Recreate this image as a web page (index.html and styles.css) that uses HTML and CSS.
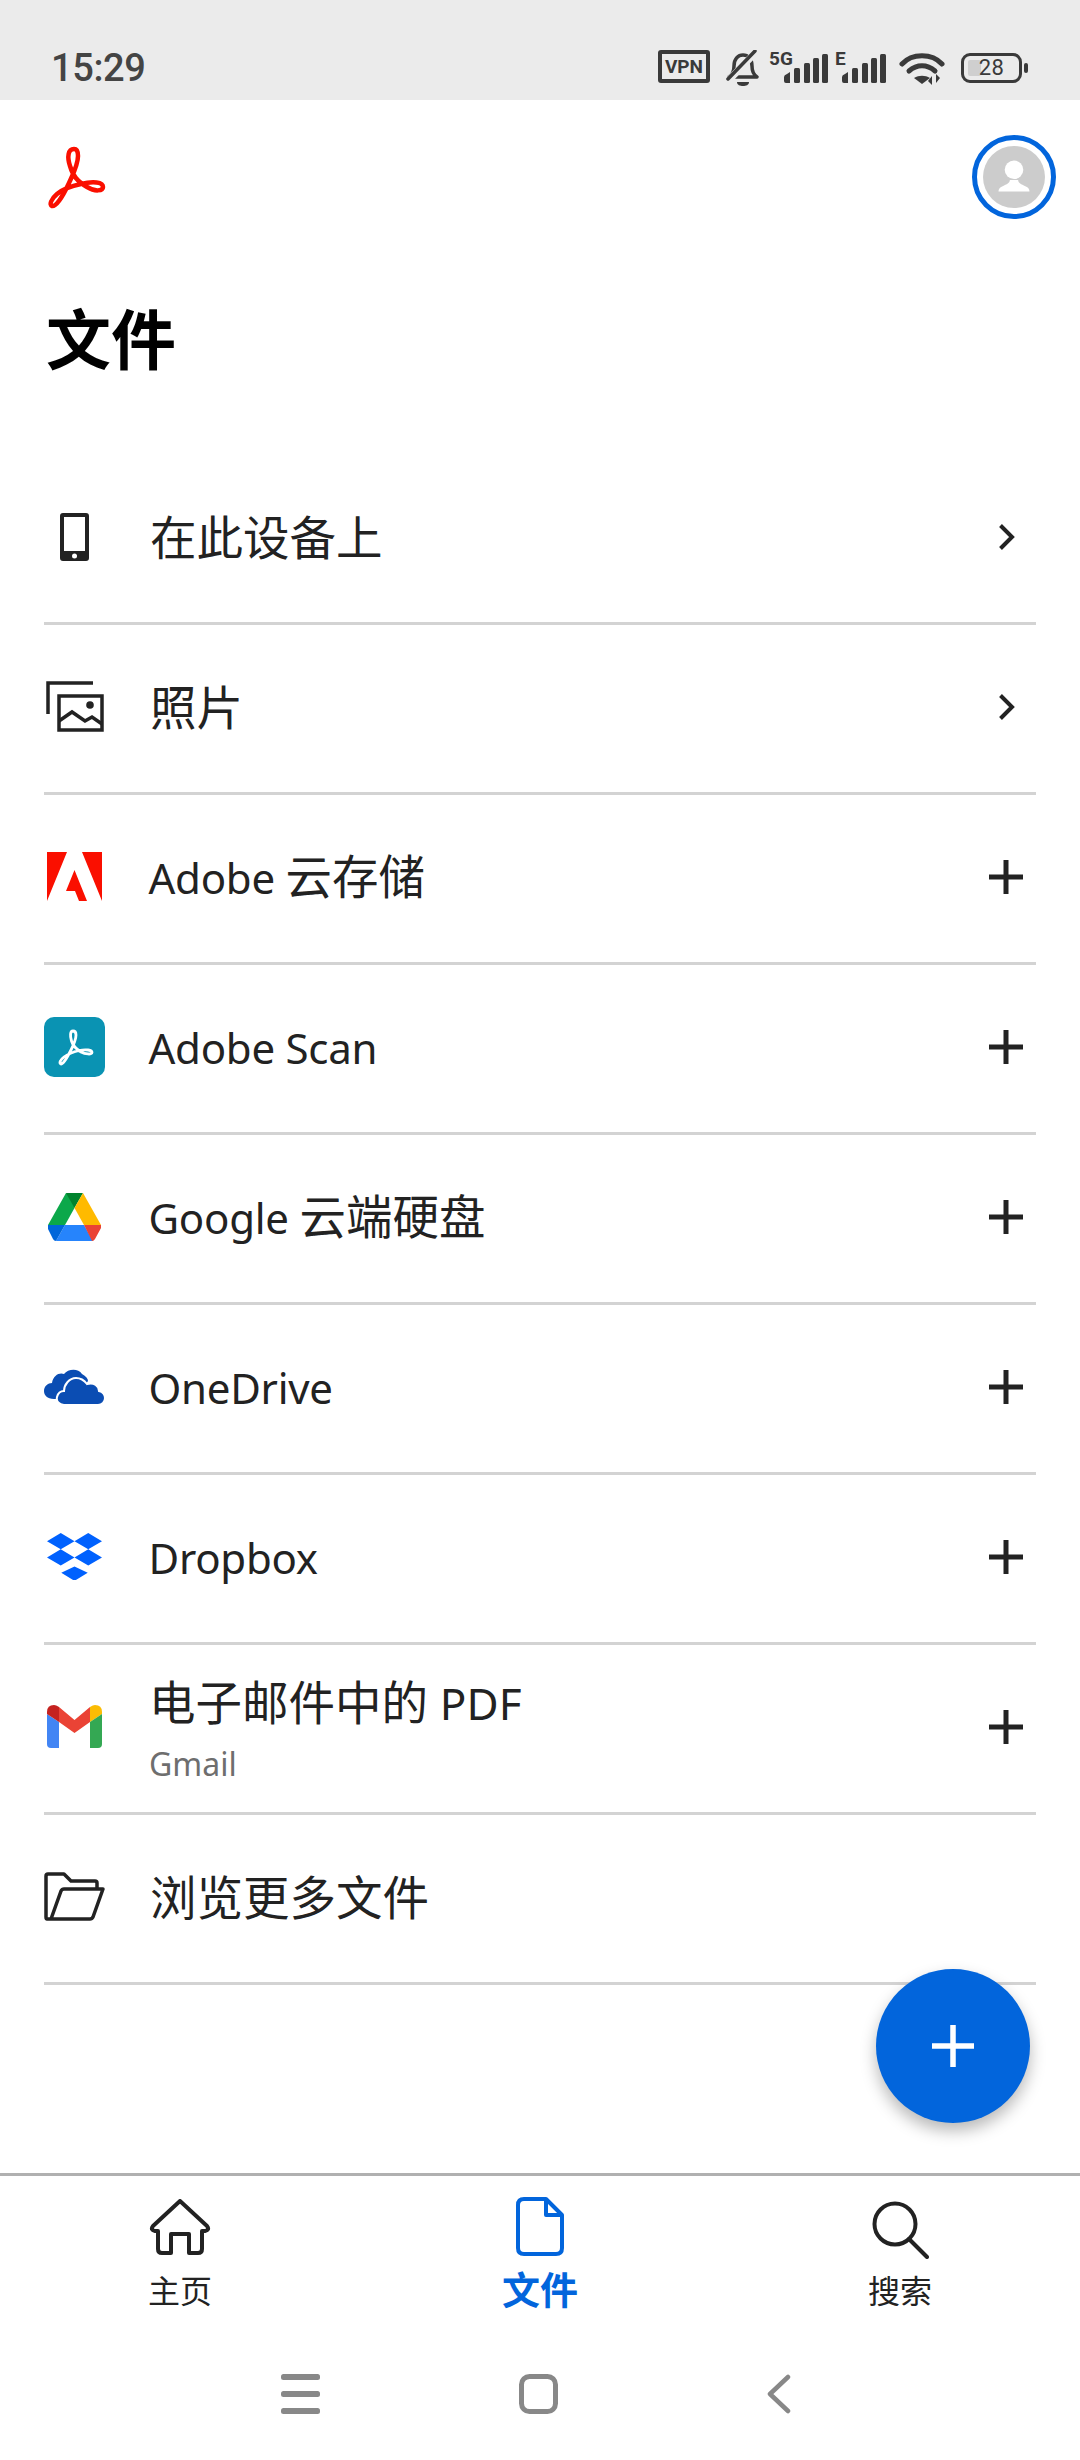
FILE: index.html
```html
<!DOCTYPE html>
<html lang="zh">
<head>
<meta charset="utf-8">
<title>文件</title>
<link rel="stylesheet" href="styles.css">
</head>
<body>
<div class="phone">
  <header class="status">
    <span class="time">15:29</span>
    <div class="status-icons">
      <span class="vpn">VPN</span>
      <svg class="i-bell" viewBox="0 0 34 37"><path d="M3 27c3-2 5-5 5-11 0-7 4-11 9-11s9 4 9 11c0 6 2 9 5 11H3Z" fill="none" stroke="#3a3a3a" stroke-width="3.500" stroke-linejoin="round"/><path d="M11 32h12c0 3-3 4-6 4s-6-1-6-4Z" fill="#3a3a3a"/><path d="M3 30 31 1" stroke="#ebebeb" stroke-width="7"/><path d="M2 29 29 1" stroke="#3a3a3a" stroke-width="3.500" stroke-linecap="round"/></svg>
      <div class="sig sig-5g">
        <span class="sig-label">5G</span>
        <svg class="i-sig" viewBox="0 0 44 29"><g fill="#3a3a3a"><path d="M0 23q0-2 3-3l3-2v11H2q-2 0-2-2Z"/><rect x="10" y="14" width="6" height="15" rx="1.5"/><rect x="20" y="9" width="6" height="20" rx="1.5"/><rect x="29" y="4" width="6" height="25" rx="1.5"/><rect x="38" y="0" width="6" height="29" rx="1.5"/></g></svg>
      </div>
      <div class="sig sig-e">
        <span class="sig-label">E</span>
        <svg class="i-sig" viewBox="0 0 44 29"><g fill="#3a3a3a"><path d="M0 23q0-2 3-3l3-2v11H2q-2 0-2-2Z"/><rect x="10" y="14" width="6" height="15" rx="1.5"/><rect x="20" y="9" width="6" height="20" rx="1.5"/><rect x="29" y="4" width="6" height="25" rx="1.5"/><rect x="38" y="0" width="6" height="29" rx="1.5"/></g></svg>
      </div>
      <svg class="i-wifi" viewBox="0 0 46 33"><g fill="none" stroke="#3a3a3a" stroke-width="5" stroke-linecap="round"><path d="M3 12C13 1 33 1 43 12"/><path d="M10 19c8-7 18-7 26 0"/></g><path d="M15 26c5-3 11-3 16 0l-8 6Z" fill="#3a3a3a"/><path d="M33 33v-9l-4 5ZM37 22v9l4-5Z" fill="#3a3a3a"/></svg>
      <div class="battery">
        <span class="bat-body"><span class="bat-fill"></span><span class="bat-num">28</span></span>
        <span class="bat-nub"></span>
      </div>
    </div>
  </header>

  <div class="appbar">
    <svg class="logo" viewBox="0 0 80 80"><path d="M37 8C31 8 30 16 33 25C36 35 40 40 50 46C58 51 66 50 66 46C66 41 56 40 44 43C34 45 26 48 20 53C14 58 12 64 15 65C19 66 26 55 32 42C36 33 41 24 41 15C41 11 40 8 37 8Z" fill="none" stroke="#fa0f00" stroke-width="4.500" stroke-linejoin="round"/></svg>
    <div class="avatar">
      <div class="avatar-in">
        <svg viewBox="0 0 60 60"><circle cx="30" cy="23" r="9" fill="#fff"/><path d="M15 44c0-2 1-4 4-5 4-2 7-3 7-6h8c0 3 3 4 7 6 3 1 4 3 4 5Z" fill="#fff"/></svg>
      </div>
    </div>
  </div>

  <h1 class="title">文件</h1>

  <ul class="list">
    <li class="row">
      <span class="ic"><svg class="w30" viewBox="0 0 29 48"><path fill-rule="evenodd" d="M3 0h23q3 0 3 3v42q0 3-3 3H3q-3 0-3-3V3q0-3 3-3Zm1 4v34h21V4Z" fill="#222"/><circle cx="14.500" cy="43" r="2.500" fill="#fff"/></svg></span>
      <span class="label">在此设备上</span>
      <svg class="chev" viewBox="0 0 17 28"><path d="M2.500 2.500 14 14 2.500 25.500" fill="none" stroke="#222" stroke-width="4"/></svg>
    </li>
    <li class="row">
      <span class="ic"><svg class="w58" viewBox="0 0 58 51"><g fill="none" stroke="#222" stroke-width="3.500"><path d="M2 33V2H47"/><rect x="13" y="15" width="43" height="34"/><path d="M13 40 26 31 39 40 46 36 56 43"/></g><circle cx="44" cy="24" r="3.800" fill="#222"/></svg></span>
      <span class="label">照片</span>
      <svg class="chev" viewBox="0 0 17 28"><path d="M2.500 2.500 14 14 2.500 25.500" fill="none" stroke="#222" stroke-width="4"/></svg>
    </li>
    <li class="row">
      <span class="ic"><svg class="w55" viewBox="0 0 55 49"><path d="M0 0H20L0 49ZM35 0H55V49ZM27.500 18 40 49H32L28 39H19Z" fill="#fa0f00"/></svg></span>
      <span class="label"><span class="lat">Adobe </span>云存储</span>
      <svg class="plus" viewBox="0 0 36 36"><path d="M18 1V35M1 18H35" stroke="#222" stroke-width="5"/></svg>
    </li>
    <li class="row">
      <span class="ic"><svg class="w61" viewBox="0 0 61 60"><rect width="61" height="60" rx="10" fill="#0a93b3"/><path d="M29 14C26 14 26 19 27.500 24C29 29 32 32 37 35C41 37 48 38 48 35.500C48 33 42 32 35 33.500C29 35 24 37 20 40C16 43 15 46 17 47C19 47 23 41 27 33C30 27 32 22 32 18C32 16 31 14 29 14Z" fill="none" stroke="#fff" stroke-width="2.800" stroke-linejoin="round"/></svg></span>
      <span class="label"><span class="lat">Adobe Scan</span></span>
      <svg class="plus" viewBox="0 0 36 36"><path d="M18 1V35M1 18H35" stroke="#222" stroke-width="5"/></svg>
    </li>
    <li class="row">
      <span class="ic"><svg class="w53" viewBox="0 0 53 48"><path d="M18 0 0 32H17L26.500 15 24 3Z" fill="#0ba84a"/><path d="M18 0H35L26.500 15Z" fill="#00832d"/><path d="M35 0 53 32H36L26.500 15Z" fill="#ffba00"/><path d="M17 32H36L45 48H8Z" fill="#2684fc"/><path d="M0 32H17L8 48Q6 48 5 46L0 36Z" fill="#0066da"/><path d="M36 32H53V35L47 46Q46 48 44 48Z" fill="#ea4335"/></svg></span>
      <span class="label"><span class="lat">Google </span>云端硬盘</span>
      <svg class="plus" viewBox="0 0 36 36"><path d="M18 1V35M1 18H35" stroke="#222" stroke-width="5"/></svg>
    </li>
    <li class="row">
      <span class="ic"><svg class="w61" viewBox="0 0 61 36"><path d="M10 30C3 30 0 26 0 22C0 17 4 14 8 14C9 6 16 3 20 5C24 0 34-1 38 5C42 7 44 10 44 12L30 30Z" fill="#0b4db3"/><path d="M20 36C15 36 12 32 13 28C14 24 17 22 20 22C20 16 25 9 32 9C37 9 40 11 43 15C50 13 55 17 55 22C59 23 61 26 61 29C61 33 58 36 54 36Z" fill="#0b4db3" stroke="#fff" stroke-width="2"/></svg></span>
      <span class="label"><span class="lat">OneDrive</span></span>
      <svg class="plus" viewBox="0 0 36 36"><path d="M18 1V35M1 18H35" stroke="#222" stroke-width="5"/></svg>
    </li>
    <li class="row">
      <span class="ic"><svg class="w55" viewBox="0 0 54 47"><path d="M13.500 0 27 8 13.500 16 0 8ZM40.500 0 54 8 40.500 16 27 8ZM13.500 16 27 24 13.500 32 0 24ZM40.500 16 54 24 40.500 32 27 24ZM27 33 40 39 27 47 14 39Z" fill="#0061fe"/></svg></span>
      <span class="label"><span class="lat">Dropbox</span></span>
      <svg class="plus" viewBox="0 0 36 36"><path d="M18 1V35M1 18H35" stroke="#222" stroke-width="5"/></svg>
    </li>
    <li class="row">
      <span class="ic"><svg class="w55" viewBox="0 0 55 43"><path d="M0 9V39Q0 43 4 43H12V17Z" fill="#4285f4"/><path d="M0 9V7Q0 0 7 0Q9 0 12 2V17Z" fill="#c5221f"/><path d="M12 2 27.500 15 43 2V17L27.500 28 12 17Z" fill="#ea4335"/><path d="M43 2Q46 0 48 0Q55 0 55 7V9L43 17Z" fill="#fbbc04"/><path d="M43 17 55 9V39Q55 43 51 43H43Z" fill="#34a853"/></svg></span>
      <span class="stack"><span class="label">电子邮件中的<span class="lat pdf"> PDF</span></span><span class="sub">Gmail</span></span>
      <svg class="plus" viewBox="0 0 36 36"><path d="M18 1V35M1 18H35" stroke="#222" stroke-width="5"/></svg>
    </li>
    <li class="row">
      <span class="ic"><svg class="w61" viewBox="0 0 61 49"><path d="M7 47H3Q2 47 2 45V4Q2 2 4 2H20L27 9H51Q53 9 53 11V17M7 47 17 19Q18 17 20 17H59L49 45Q48 47 46 47Z" fill="none" stroke="#222" stroke-width="3.500" stroke-linejoin="round"/></svg></span>
      <span class="label">浏览更多文件</span>
    </li>
  </ul>

  <button class="fab" type="button"><svg viewBox="0 0 42 42"><path d="M21 0V42M0 21H42" stroke="#fff" stroke-width="5.500"/></svg></button>

  <nav class="tabs">
    <div class="tab tab-home">
      <svg class="t-home" viewBox="0 0 62 56"><path d="M31 2 58 27Q61 31 56 32H53V50Q53 54 49 54H40V35H22V54H13Q9 54 9 50V32H6Q1 31 4 27Z" fill="none" stroke="#222" stroke-width="4" stroke-linejoin="round"/></svg>
      <span class="tab-label">主页</span>
    </div>
    <div class="tab active">
      <svg class="t-doc" viewBox="0 0 48 59"><path d="M8 2H30L46 18V51Q46 57 40 57H8Q2 57 2 51V8Q2 2 8 2ZM30 2V18H46" fill="none" stroke="#0265dc" stroke-width="4" stroke-linejoin="round"/></svg>
      <span class="tab-label">文件</span>
    </div>
    <div class="tab tab-search">
      <svg class="t-search" viewBox="0 0 57 58"><circle cx="23" cy="23" r="20.500" fill="none" stroke="#222" stroke-width="4"/><path d="M37 38 55 56" stroke="#222" stroke-width="4" stroke-linecap="round"/></svg>
      <span class="tab-label">搜索</span>
    </div>
  </nav>

  <div class="gestures">
    <svg class="g-menu" viewBox="0 0 39 40"><g fill="#888"><rect y="0" width="39" height="6" rx="2.500"/><rect y="17" width="39" height="6" rx="2.500"/><rect y="34" width="39" height="6" rx="2.500"/></g></svg>
    <svg class="g-home" viewBox="0 0 39 40"><rect x="2.500" y="2.500" width="34" height="35" rx="8" fill="none" stroke="#888" stroke-width="5"/></svg>
    <svg class="g-back" viewBox="0 0 25 40"><path d="M22 3 4 20 22 37" fill="none" stroke="#888" stroke-width="4.500" stroke-linecap="round" stroke-linejoin="round"/></svg>
  </div>
</div>
</body>
</html>
```

FILE: styles.css
```css
* { box-sizing: border-box; }
html, body { margin: 0; padding: 0; background: #fff; }
body { font-family: "Noto Sans", "Noto Sans CJK SC", sans-serif; color: #222; }
.phone { position: relative; width: 1080px; height: 2460px; overflow: hidden; display: flex; flex-direction: column; background: #fff; }

.status { height: 100px; flex: none; background: #ebebeb; display: flex; align-items: flex-end; justify-content: space-between; padding: 0 52px 14px 51px; }
.time { font: 500 38px/40px Roboto, sans-serif; color: #444; letter-spacing: -0.4px; position: relative; top: 2px; }
.status-icons { display: flex; align-items: flex-end; height: 40px; }
.vpn { width: 52px; height: 33px; border: 4px solid #3a3a3a; border-radius: 3px; font: 700 19px/25px Roboto, sans-serif; color: #3a3a3a; text-align: center; margin-bottom: 3px; }
.i-bell { width: 34px; height: 37px; margin-left: 16px; margin-bottom: -1px; }
.sig { position: relative; height: 29px; margin-left: 9px; margin-bottom: 3px; display: flex; justify-content: flex-end; }
.sig-5g { width: 59px; }
.sig-e { width: 51px; margin-left: 7px; }
.sig-label { position: absolute; left: 0; top: -5px; font: 700 19px/20px Roboto, sans-serif; color: #3a3a3a; }
.i-sig { width: 44px; height: 29px; }
.i-wifi { width: 46px; height: 33px; margin-left: 13px; margin-bottom: 1px; }
.battery { display: flex; align-items: center; margin-left: 16px; margin-bottom: 3px; }
.bat-body { position: relative; width: 61px; height: 30px; border: 3px solid #3a3a3a; border-radius: 9px; display: flex; align-items: center; justify-content: center; }
.bat-fill { position: absolute; left: 4px; top: 4px; bottom: 4px; width: 13px; background: #cfcfcf; border-radius: 2px; }
.bat-num { position: relative; font: 400 22px/24px Roboto, sans-serif; color: #3a3a3a; letter-spacing: 0.5px; }
.bat-nub { width: 4px; height: 10px; background: #3a3a3a; border-radius: 2px; margin-left: 2px; }

.appbar { flex: none; height: 154px; display: flex; align-items: center; justify-content: space-between; padding: 0 24px 0 37px; }
.logo { width: 80px; height: 80px; position: relative; top: 4px; }
.avatar { width: 84px; height: 84px; border: 5px solid #0265dc; border-radius: 50%; display: flex; align-items: center; justify-content: center; }
.avatar-in { width: 62px; height: 62px; border-radius: 50%; background: #ccc; }
.avatar-in svg { display: block; width: 62px; height: 62px; }

.title { flex: none; margin: 0; height: 201px; padding: 40px 0 0 46px; font: 700 65px/84px "Noto Sans CJK SC", sans-serif; color: #000; }

.list { flex: none; list-style: none; margin: 0; padding: 0 44px; }
.row { height: 170px; border-bottom: 3px solid #d3d3d3; padding-bottom: 4px; display: flex; align-items: center; }
.ic { flex: none; width: 106px; display: flex; align-items: center; justify-content: center; padding-right: 45px; }
.w30 { width: 29px; height: 48px; }
.w53 { width: 53px; height: 48px; }
.w55 { width: 55px; height: auto; }
.w58 { width: 58px; height: 51px; }
.w61 { width: 61px; height: auto; }
.label { flex: 1; font-size: 46.5px; line-height: 60px; color: #222; }
.lat { font-size: 42px; letter-spacing: -0.25px; margin-left: -1.500px; }
.pdf { font-size: 44px; letter-spacing: 0.2px; margin-left: 0; }
.stack { flex: 1; display: flex; flex-direction: column; padding-top: 9px; }
.stack .label { flex: none; line-height: 56px; margin-top: -5px; margin-left: -1px; }
.sub { font-size: 32px; line-height: 40px; color: #6e6e6e; margin-top: 13px; margin-left: -1px; }
.chev { flex: none; width: 17px; height: 28px; margin-right: 21px; }
.plus { flex: none; width: 36px; height: 36px; margin-right: 12px; }

.fab { position: absolute; left: 876px; top: 1969px; width: 154px; height: 154px; border: 0; padding: 0; border-radius: 50%; background: #0265dc; box-shadow: 0 8px 16px rgba(0,0,0,.28); display: flex; align-items: center; justify-content: center; }
.fab svg { width: 42px; height: 42px; }

.tabs { position: absolute; left: 0; right: 0; top: 2173px; height: 160px; border-top: 3px solid #b0b0b0; display: grid; grid-template-columns: repeat(3, 1fr); }
.tab { display: flex; flex-direction: column; align-items: center; justify-content: flex-end; height: 132px; gap: 8px; }
.tab-home { gap: 15px; }
.tab-search { gap: 11px; }
.active { gap: 11px; height: 133px; }
.t-home { width: 62px; height: 56px; }
.t-doc { width: 48px; height: 59px; }
.t-search { width: 57px; height: 58px; }
.tab-label { font: 400 32px/38px "Noto Sans CJK SC", sans-serif; color: #222; }
.active .tab-label { font-weight: 700; font-size: 38px; line-height: 42px; color: #0265dc; }

.gestures { position: absolute; left: 281px; top: 2374px; height: 40px; display: flex; }
.g-menu, .g-home { width: 39px; height: 40px; }
.g-home { margin-left: 199px; }
.g-back { width: 25px; height: 40px; margin-left: 208px; }
```
